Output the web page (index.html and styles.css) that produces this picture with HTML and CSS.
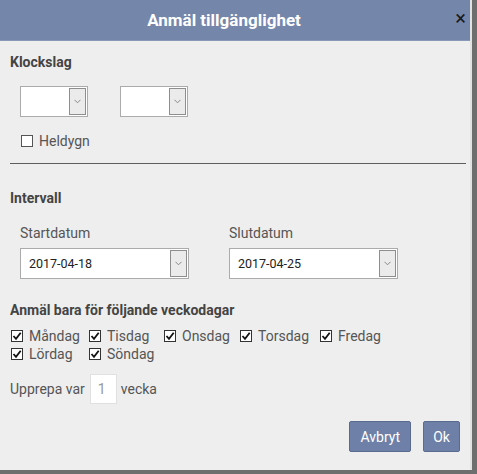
FILE: index.html
```html
<!DOCTYPE html>
<html>
<head>
<meta charset="utf-8">
<link rel="stylesheet" href="styles.css">
</head>
<body>
<div class="dialog">
  <div class="header">
    <span class="title">Anmäl tillgänglighet</span>
    <span class="close">&times;</span>
  </div>
  <div class="content">
    <div class="heading h-klock">Klockslag</div>
    <div class="time-row">
      <div class="select small"><span class="val"></span><span class="btn"><svg width="7" height="5" viewBox="0 0 7 5"><path d="M0.5 0.8 L3.5 3.8 L6.5 0.8" fill="none" stroke="#888" stroke-width="1"/></svg></span></div>
      <div class="select small"><span class="val"></span><span class="btn"><svg width="7" height="5" viewBox="0 0 7 5"><path d="M0.5 0.8 L3.5 3.8 L6.5 0.8" fill="none" stroke="#888" stroke-width="1"/></svg></span></div>
    </div>
    <label class="check heldygn"><span class="box"></span>Heldygn</label>
    <hr class="sep">
    <div class="heading h-interval">Intervall</div>
    <div class="date-row">
      <div class="field">
        <div class="flabel">Startdatum</div>
        <div class="select wide"><span class="val">2017-04-18</span><span class="btn"><svg width="7" height="5" viewBox="0 0 7 5"><path d="M0.5 0.8 L3.5 3.8 L6.5 0.8" fill="none" stroke="#888" stroke-width="1"/></svg></span></div>
      </div>
      <div class="field">
        <div class="flabel">Slutdatum</div>
        <div class="select wide"><span class="val">2017-04-25</span><span class="btn"><svg width="7" height="5" viewBox="0 0 7 5"><path d="M0.5 0.8 L3.5 3.8 L6.5 0.8" fill="none" stroke="#888" stroke-width="1"/></svg></span></div>
      </div>
    </div>
    <div class="heading h-days">Anmäl bara för följande veckodagar</div>
    <div class="days">
      <label class="check day d1"><span class="box on"><svg width="10" height="10" viewBox="0 0 10 10"><path d="M1.5 5 L4 7.8 L8.7 1.8" fill="none" stroke="#111" stroke-width="1.8"/></svg></span>Måndag</label>
      <label class="check day d2"><span class="box on"><svg width="10" height="10" viewBox="0 0 10 10"><path d="M1.5 5 L4 7.8 L8.7 1.8" fill="none" stroke="#111" stroke-width="1.8"/></svg></span>Tisdag</label>
      <label class="check day d3"><span class="box on"><svg width="10" height="10" viewBox="0 0 10 10"><path d="M1.5 5 L4 7.8 L8.7 1.8" fill="none" stroke="#111" stroke-width="1.8"/></svg></span>Onsdag</label>
      <label class="check day d4"><span class="box on"><svg width="10" height="10" viewBox="0 0 10 10"><path d="M1.5 5 L4 7.8 L8.7 1.8" fill="none" stroke="#111" stroke-width="1.8"/></svg></span>Torsdag</label>
      <label class="check day d5"><span class="box on"><svg width="10" height="10" viewBox="0 0 10 10"><path d="M1.5 5 L4 7.8 L8.7 1.8" fill="none" stroke="#111" stroke-width="1.8"/></svg></span>Fredag</label>
      <label class="check day d1"><span class="box on"><svg width="10" height="10" viewBox="0 0 10 10"><path d="M1.5 5 L4 7.8 L8.7 1.8" fill="none" stroke="#111" stroke-width="1.8"/></svg></span>Lördag</label>
      <label class="check day d2"><span class="box on"><svg width="10" height="10" viewBox="0 0 10 10"><path d="M1.5 5 L4 7.8 L8.7 1.8" fill="none" stroke="#111" stroke-width="1.8"/></svg></span>Söndag</label>
    </div>
    <div class="repeat">
      <span>Upprepa var</span>
      <span class="num">1</span>
      <span>vecka</span>
    </div>
    <div class="actions">
      <button class="bt">Avbryt</button>
      <button class="bt ok">Ok</button>
    </div>
  </div>
</div>
</body>
</html>
```
FILE: styles.css
```css
html, body {
  margin: 0;
  padding: 0;
}
body {
  background: #6e6e6e;
  width: 477px;
  height: 474px;
  font-family: Roboto, "Liberation Sans", sans-serif;
  color: #555;
}
.dialog {
  width: 472px;
  height: 470px;
  background: #eeeeee;
  border-right: 2px solid #e2e2e2;
  box-sizing: border-box;
  display: flex;
  flex-direction: column;
}
.header {
  height: 40px;
  background: #7586ab;
  border-bottom: 1px solid #8a98b8;
  position: relative;
  display: flex;
  align-items: center;
  justify-content: center;
  padding-right: 22px;
  flex-shrink: 0;
}
.title {
  color: #fff;
  font-weight: bold;
  font-size: 17px;
}
.close {
  position: absolute;
  right: 4px;
  top: 7px;
  font-size: 20px;
  line-height: 22px;
  color: #1a1a1a;
}
.content {
  padding: 0 0 0 10px;
  display: flex;
  flex-direction: column;
  align-items: flex-start;
}
.heading {
  font-weight: bold;
  font-size: 14px;
  color: #444;
  line-height: 16px;
}
.h-klock { margin-top: 13px; }
.time-row {
  display: flex;
  gap: 32px;
  margin-top: 16px;
  margin-left: 10px;
}
.select {
  height: 31px;
  box-sizing: border-box;
  border: 1px solid #ababab;
  background: #fff;
  display: flex;
  align-items: stretch;
  padding: 1px 1px 1px 0;
}
.select.small { width: 68px; }
.select.wide { width: 169px; }
.select .val {
  flex: 1;
  font-size: 12.5px;
  color: #222;
  padding-left: 8px;
  display: flex;
  align-items: center;
}
.select .btn {
  width: 17px;
  box-sizing: border-box;
  border: 1px solid #8e8e8e;
  background: #ebebeb;
  display: flex;
  align-items: center;
  justify-content: center;
}
.check {
  display: flex;
  align-items: center;
  font-size: 14px;
  color: #555;
  line-height: 18px;
}
.box {
  width: 12px;
  height: 12px;
  box-sizing: border-box;
  border: 1px solid #555;
  background: #fff;
  margin-right: 6px;
  display: flex;
  align-items: center;
  justify-content: center;
}
.box.on { border-color: #333; }
.heldygn {
  margin-top: 15px;
  margin-left: 11px;
}
.sep {
  width: 456px;
  margin: 13px 0 0 0;
  border: 0;
  border-top: 1px solid #5e5e5e;
  height: 0;
}
.h-interval { margin-top: 26px; }
.date-row {
  display: flex;
  gap: 40px;
  margin-left: 10px;
  margin-top: 19px;
}
.flabel {
  font-size: 14px;
  color: #555;
  line-height: 16px;
  margin-bottom: 7px;
}
.h-days { margin-top: 23px; }
.days {
  display: flex;
  flex-wrap: wrap;
  width: 400px;
  margin-top: 9px;
  margin-left: 1px;
}
.d1 { width: 78px; }
.d2 { width: 75px; }
.d3 { width: 76px; }
.d4 { width: 80px; }
.d5 { width: 80px; }
.repeat {
  display: flex;
  align-items: center;
  font-size: 14px;
  color: #555;
  margin-top: 11px;
}
.repeat .num {
  width: 27px;
  height: 30px;
  box-sizing: border-box;
  background: #fff;
  border: 1px solid #e0e0e0;
  color: #999;
  margin: 0 4px 0 5px;
  padding-left: 7px;
  display: flex;
  align-items: center;
}
.actions {
  align-self: stretch;
  display: flex;
  justify-content: flex-end;
  gap: 12px;
  margin-top: 17px;
  padding-right: 10px;
}
.bt {
  height: 31px;
  padding: 0 10px;
  background: #6e80a7;
  border: 1px solid #5b6b90;
  border-radius: 2px;
  color: #fff;
  font-family: Roboto, "Liberation Sans", sans-serif;
  font-size: 14px;
}
.bt.ok { width: 37px; padding: 0; }
```
